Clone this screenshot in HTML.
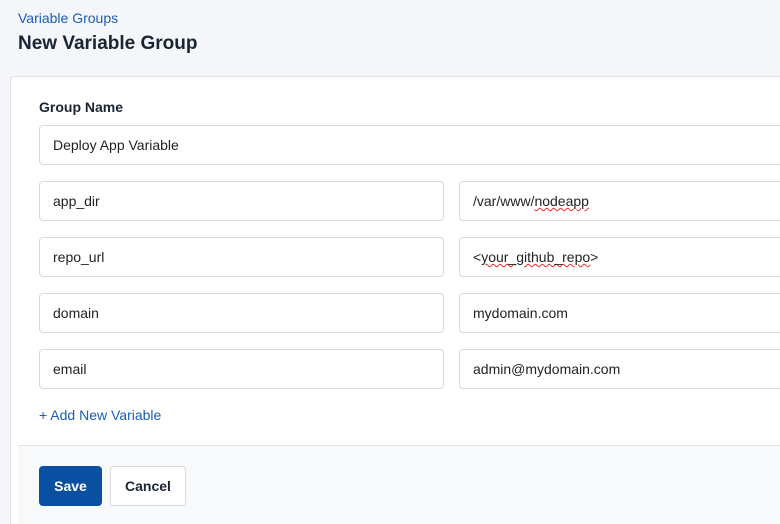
<!DOCTYPE html>
<html style="overflow:hidden;height:524px"><head><style>
*{box-sizing:border-box;margin:0;padding:0}
body{width:780px;height:524px;overflow:hidden;background:#f4f6f9;font-family:"Liberation Sans",sans-serif;color:#1b2433;position:relative}
.a{position:absolute}
.bc{left:18px;top:10px;font-size:14px;color:#1a5fb0}
h1{position:absolute;left:18px;top:33px;font-size:19px;font-weight:bold;color:#1b2433}
.card{left:10px;top:76px;width:790px;height:448px;background:#fff;border:1px solid #dfe2e7;border-bottom:none;border-radius:4px 0 0 0}
.foot{left:18px;top:445px;width:770px;height:79px;background:#f8f9fb;border-top:1px solid #dfe2e7}
.lbl{left:39px;top:99px;font-size:14px;font-weight:bold}
.in{position:absolute;height:40px;border:1px solid #d5d9df;border-radius:4px;background:#fff;font-size:14px;padding-left:13px;line-height:38px;color:#222}
.sq{text-decoration:underline wavy #e0302b;text-decoration-thickness:1px}
.add{left:39px;top:407px;font-size:14px;color:#1a5fb0}
.btn{position:absolute;top:466px;height:40px;border-radius:4px;font-size:14px;font-weight:bold;line-height:38px;text-align:center}
</style></head><body>
<div class="a bc">Variable Groups</div>
<h1>New Variable Group</h1>
<div class="a card"></div>
<div class="a foot"></div>
<div class="a lbl">Group Name</div>
<div class="in" style="left:39px;top:125px;width:760px">Deploy App Variable</div>
<div class="in" style="left:39px;top:181px;width:405px">app_dir</div>
<div class="in" style="left:459px;top:181px;width:340px">/var/www/<span class="sq">nodeapp</span></div>
<div class="in" style="left:39px;top:237px;width:405px">repo_url</div>
<div class="in" style="left:459px;top:237px;width:340px">&lt;<span class="sq">your_github_repo</span>&gt;</div>
<div class="in" style="left:39px;top:293px;width:405px">domain</div>
<div class="in" style="left:459px;top:293px;width:340px">mydomain.com</div>
<div class="in" style="left:39px;top:349px;width:405px">email</div>
<div class="in" style="left:459px;top:349px;width:340px">admin@mydomain.com</div>
<div class="a add">+ Add New Variable</div>
<div class="btn" style="left:39px;width:63px;background:#0b4fa2;color:#fff;border:1px solid #0b4fa2">Save</div>
<div class="btn" style="left:110px;width:76px;background:#fff;color:#1b2433;border:1px solid #d5d9df">Cancel</div>
</body></html>
